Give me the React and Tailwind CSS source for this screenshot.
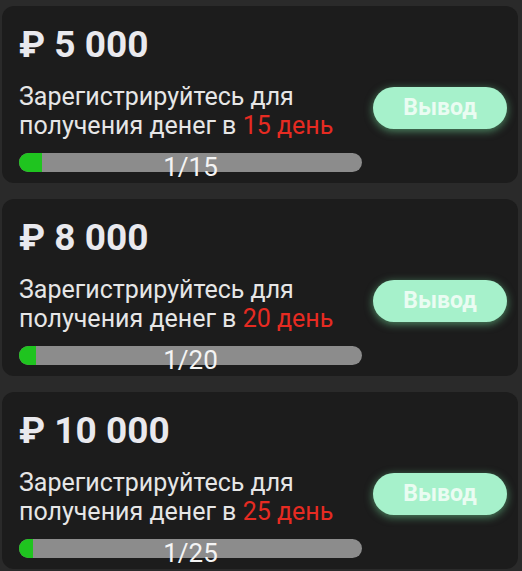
import React from "react";

const offers = [
  { amount: "5 000", day: 15 },
  { amount: "8 000", day: 20 },
  { amount: "10 000", day: 25 },
];

function OfferCard({ amount, day }) {
  const progress = (1 / day) * 100;

  return (
    <div className="rounded-[12px] bg-[#1c1c1c] pl-[17px] pr-[11px] pt-[19px] pb-[11px]">
      <h2 className="text-[37px] leading-[40px] font-bold text-[#e9e9ee]">
        ₽ {amount}
      </h2>

      <div className="mt-[17px] flex items-start justify-between">
        <p className="text-[25px] leading-[29px] text-[#e6e6e6]">
          Зарегистрируйтесь для
          <br />
          получения денег в{" "}
          <span className="text-[#e62b22]">{day} день</span>
        </p>
        <button className="mt-[5px] h-[42px] w-[134px] rounded-full bg-[#a6f1cb] text-[23px] font-bold text-[#eafcf2] shadow-[0_2px_8px_rgba(120,230,160,0.55)]">
          Вывод
        </button>
      </div>

      {/* progress */}
      <div className="relative mt-[13px] h-[19px] w-[343px] rounded-full bg-[#8c8c8c]">
        <div
          className="h-full rounded-l-full bg-[#1fc41f]"
          style={{ width: `${progress}%` }}
        />
        <span className="absolute inset-x-0 top-[1px] text-center text-[26px] leading-[26px] text-[#f4f4f4]">
          1/{day}
        </span>
      </div>
    </div>
  );
}

export default function App() {
  return (
    <div
      className="min-h-screen bg-[#2a2a2a] px-[2px] pt-[6px] pr-[4px]"
      style={{ fontFamily: "Roboto, 'Liberation Sans', sans-serif" }}
    >
      <div className="flex flex-col gap-[16px]">
        {offers.map((o) => (
          <OfferCard key={o.day} {...o} />
        ))}
      </div>
    </div>
  );
}
